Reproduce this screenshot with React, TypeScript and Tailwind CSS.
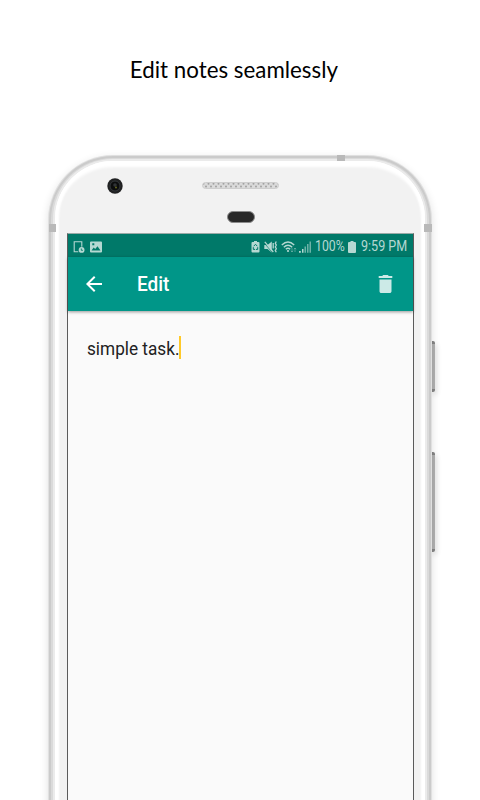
import React from "react";

function PhotoIcon() {
  return (
    <svg width="12" height="12" viewBox="0 0 12 12" fill="#b5d8d2">
      <path fillRule="evenodd" d="M1 .5h10q1 0 1 1v9q0 1-1 1H1q-1 0-1-1v-9q0-1 1-1ZM1.500 9.500h9L7.500 5.200 5.200 8 3.700 6.500ZM2.300 2.300v2h2v-2Z" />
    </svg>
  );
}

function DeviceIcon() {
  return (
    <svg width="12" height="12" viewBox="0 0 12 12" fill="none">
      <path d="M5.300 10.800H1.200V.8h7.600v5" stroke="#b5d8d2" strokeWidth="1.100" />
      <circle cx="8.600" cy="8.900" r="2.900" fill="#b5d8d2" />
      <path d="M8.300 7.500v1.800h1.600" stroke="#007969" strokeWidth=".9" />
    </svg>
  );
}

function StatusBar() {
  return (
    <div className="flex h-[23px] items-center bg-[#007969] pt-[2px] pl-[5px] pr-[6px] text-[#b5d8d2]">
      <DeviceIcon />
      <div className="w-[5px]" />
      <PhotoIcon />
      <div className="grow" />
      <svg width="9" height="12" viewBox="0 0 9 12">
        <path d="M3 0h3v1h1.500q1 0 1 1v8.500q0 1-1 1h-6q-1 0-1-1V2q0-1 1-1H3Z" fill="#b5d8d2" />
        <path d="M2.700 5.200 4.500 3.300l1.800 1.900M6.700 6.200v2.200H5M2.300 6.200v2.200h1.800" fill="none" stroke="#007969" strokeWidth="1" />
      </svg>
      <svg className="ml-1" width="14" height="12" viewBox="0 0 14 12">
        <path d="M.3 4h3.200L7.800 .5v11L3.500 8H.3Z" fill="#b5d8d2" />
        <path d="M0 1.800 8.500 11.500" stroke="#007969" strokeWidth=".8" />
        <path d="M.8 .8 9.300 11" stroke="#b5d8d2" strokeWidth="1.200" />
        <path d="M9.200 2v5.500" stroke="#b5d8d2" strokeWidth="1.300" />
        <path d="M12.300 .5l-1 1.800 1 1.800-1 1.800 1 1.800-1 1.800 1 1.800" stroke="#b5d8d2" fill="none" strokeWidth="1.300" />
      </svg>
      <svg className="ml-[3px]" width="18" height="12" viewBox="0 0 18 12" fill="none" stroke="#b5d8d2">
        <path d="M.8 4Q7 -2 13.200 4M2.800 6.200Q7 2.300 11.200 6.200M4.800 8.300Q7 6.200 9.200 8.300" strokeWidth="1.400" />
        <circle cx="7" cy="10" r="1.100" fill="#b5d8d2" stroke="none" />
        <path d="M11 7v4M9.800 9.800 11 11l1.200-1.200M14 11V7M12.800 8.200 14 7l1.200 1.200" strokeWidth=".8" opacity=".5" />
      </svg>
      <svg width="13" height="12" viewBox="0 0 13 12" fill="#b5d8d2">
        <path d="M0 10h1.800v1.800H0ZM3 8h1.500v3.800H3Z" />
        <path d="M5.500 5.500H7v6.300H5.500ZM8 3h1.500v8.800H8ZM10.500 .5H12v11.300h-1.500Z" opacity=".6" />
      </svg>
      <span className="ml-[3px] w-[31px] whitespace-nowrap text-[14.500px] leading-[22px]">
        <span className="inline-block origin-left scale-x-[0.85]">100%</span>
      </span>
      <svg className="ml-[2px] mr-px" width="8" height="12" viewBox="0 0 8 12" fill="#b5d8d2">
        <path d="M2.500 0h3v1H7q1 0 1 1v9q0 1-1 1H1q-1 0-1-1V2q0-1 1-1h1.500Z" />
      </svg>
      <span className="ml-1 w-[46px] whitespace-nowrap text-[14.500px] leading-[22px]">
        <span className="inline-block origin-left scale-x-[0.865]">9:59 PM</span>
      </span>
    </div>
  );
}

function Toolbar() {
  return (
    <div className="relative flex h-[54px] items-center bg-[#009688] pb-px pl-[14px] pr-[15px] shadow-[0_1px_3px_rgba(0,0,0,0.4)]">
      <svg width="24" height="24" viewBox="0 0 24 24" fill="#fff">
        <path d="M20 11H7.830l5.590-5.590L12 4l-8 8 8 8 1.410-1.410L7.830 13H20z" />
      </svg>
      <h2 className="ml-[31px] grow pt-px text-[20px] font-medium leading-6 text-white">
        <span className="inline-block origin-left scale-x-[0.95]">Edit</span>
      </h2>
      <svg width="24" height="24" viewBox="0 0 24 24" fill="#cceae7">
        <path d="M5.500 19.300c0 1 .8 1.800 1.800 1.800h8.400c1 0 1.800-.8 1.800-1.800V7.500h-12zM18.300 4h-3.500l-1-1H9.200l-1 1H4.700v2h13.600V4z" />
      </svg>
    </div>
  );
}

function PhoneTop() {
  return (
    <div className="flex h-[72px] items-start pl-[40px]">
      <svg className="mt-[17px]" width="16" height="16" viewBox="0 0 16 16">
        <circle cx="8" cy="8" r="7.700" fill="#202122" />
        <circle cx="8" cy="8" r="5" fill="#0b0c0d" stroke="#34383b" />
        <circle cx="8" cy="7" r="1.800" fill="#303336" />
        <circle cx="9" cy="9.500" r="1" fill="#65661f" />
      </svg>
      <div className="ml-[79px] mt-[21px] flex w-[77px] flex-col items-center">
        <svg width="77" height="7" viewBox="0 0 77 7">
          <defs>
            <pattern id="grille" width="5" height="6" patternUnits="userSpaceOnUse">
              <rect width="5" height="6" fill="#dadada" />
              <circle cx="1.500" cy="1.800" r="1" fill="#a2a2a2" />
              <circle cx="4" cy="4.400" r="1" fill="#a2a2a2" />
            </pattern>
          </defs>
          <rect x=".5" y=".5" width="76" height="6" rx="3" fill="url(#grille)" stroke="#cecece" />
        </svg>
        <div className="mt-[22px] h-[12px] w-[28px] rounded-[6px] border border-[#8b8b8b] bg-[#292929]" />
      </div>
    </div>
  );
}

function Phone() {
  return (
    <div className="relative mx-auto h-[705px] w-[384px]">
      <div className="absolute -right-[3px] top-[186px] h-[51px] w-[4px] rounded-r-[2px] border-y-[3px] border-[#858585] bg-[#b0b0b0] shadow-[2px_3px_5px_rgba(0,0,0,0.12)]" />
      <div className="absolute -right-[3px] top-[297px] h-[100px] w-[4px] rounded-r-[2px] border-y-[3px] border-[#858585] bg-[#b0b0b0] shadow-[2px_3px_5px_rgba(0,0,0,0.12)]" />
      <div className="relative h-full rounded-t-[65px] bg-[#e0e0e0] px-px pt-px shadow-[0_3px_9px_rgba(0,0,0,0.12)]">
        <div className="h-full rounded-t-[64px] bg-[#cbcbcb] px-[2px] pt-[2px]">
          <div className="h-full rounded-t-[62px] bg-[#dadada] px-[2px] pt-px">
            <div className="h-full rounded-t-[60px] bg-[#ebebeb] px-[2px] pt-[2px]">
              <div className="h-full rounded-t-[58px] bg-[#f2f2f2] pl-[12px] pr-[11px] shadow-[inset_0_6px_3px_#fff,inset_4px_0_2px_#fff,inset_-4px_0_2px_#fff]">
                <PhoneTop />
                <div className="h-[640px] border border-[#5b5b5b] border-t-[#99aaa7] bg-[#fafafa]">
                  <StatusBar />
                  <Toolbar />
                  <div className="flex items-start pl-[19px] pt-[25px]">
                    <p className="w-[92px] whitespace-nowrap text-[18px] leading-[25px] text-[#212121]">
                      <span className="inline-block origin-left scale-x-[0.955]">simple task.</span>
                    </p>
                    <div className="h-[23px] w-[2px] bg-[#ffc928]" />
                  </div>
                </div>
              </div>
            </div>
          </div>
        </div>
      </div>
      <div className="absolute left-[289px] top-0 h-[6px] w-[8px] bg-[#b9b9b9]" />
      <div className="absolute left-px top-[69px] h-[8px] w-[7px] bg-[#b9b9b9]" />
      <div className="absolute right-0 top-[69px] h-[8px] w-[8px] bg-[#b9b9b9]" />
    </div>
  );
}

export default function App() {
  return (
    <main className="h-[800px] w-[480px] overflow-hidden bg-white font-['Roboto','Liberation_Sans',sans-serif]">
      <header className="flex h-[155px] justify-center pt-[54px] pr-[13px]">
        <h1 className="scale-x-[0.93] whitespace-nowrap font-['Lato','Open_Sans',sans-serif] text-[24px] leading-[30px] text-black">Edit notes seamlessly</h1>
      </header>
      <Phone />
    </main>
  );
}
